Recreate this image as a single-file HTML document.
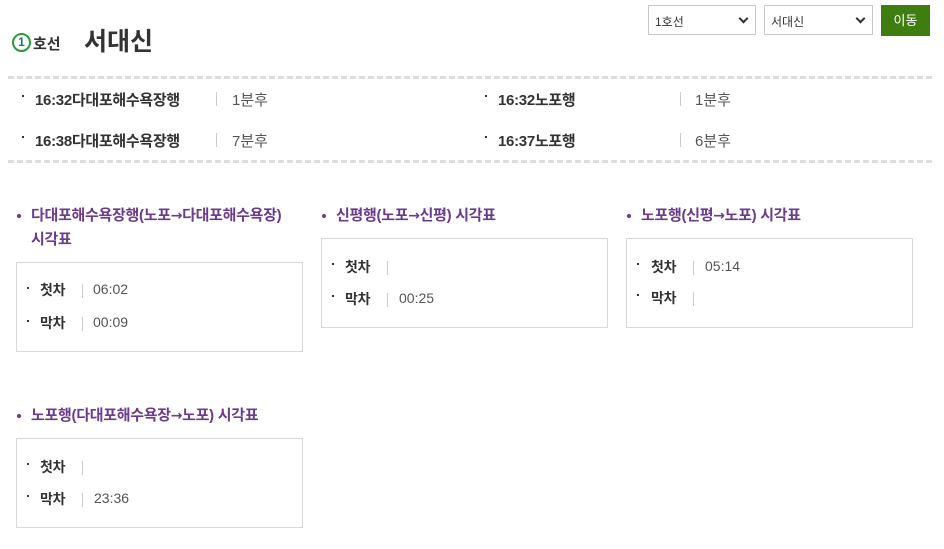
<!DOCTYPE html>
<html><head><meta charset="utf-8"><style>
body{margin:0;width:944px;height:549px;background:#fff;font-family:"Liberation Sans","Noto Sans CJK KR",sans-serif;color:#333;position:relative;overflow:hidden}
.a{position:absolute;white-space:nowrap}
.dash{position:absolute;left:8px;width:924px;height:0;border-top:3px dashed #ddd}
.b{font-weight:bold;font-size:15px;color:#333;letter-spacing:-0.3px}
.v{font-size:15px;color:#555}
.sep{position:absolute;width:1px;height:14px;background:#ccc}
.dot{position:absolute;width:2px;height:2px;background:#333}
.t{position:absolute;color:#6b3b8c;font-weight:bold;font-size:15px;line-height:24px;letter-spacing:-0.3px}
.t:before{content:"";position:absolute;left:-14px;top:10px;width:4px;height:4px;border-radius:50%;background:#6b3b8c}
.ar{font-family:"DejaVu Sans",sans-serif;font-size:14px}
.box{position:absolute;width:285px;height:88px;border:1px solid #d8d8d8}
.box .dot{left:10px}
.sel{position:absolute;top:5px;height:30px;border:1px solid #c8c8c8;font-size:12px;color:#333;box-sizing:border-box;padding:7px 6px}
.sel:after{content:"";position:absolute;right:8px;top:9px;width:5px;height:5px;border-right:2px solid #333;border-bottom:2px solid #333;transform:rotate(45deg)}
</style></head><body>
<div class="a" style="left:12px;top:33px;width:19px;height:19px;border:2px solid #2a9a3a;border-radius:50%;box-sizing:border-box;font-size:12px;font-weight:bold;color:#1a7a6a;text-align:center;line-height:15px">1</div>
<div class="a" style="left:33px;top:33px;font-size:15px;font-weight:bold;color:#333">호선</div>
<div class="a" style="left:84px;top:22px;font-size:25px;font-weight:bold;color:#333">서대신</div>
<div class="sel" style="left:648px;width:108px">1호선</div>
<div class="sel" style="left:764px;width:109px">서대신</div>
<div class="a" style="left:881px;top:5px;width:49px;height:31px;background:#3f7d11;color:#fff;font-size:13px;text-align:center;line-height:31px;display:flex;align-items:center;justify-content:center">이동</div>
<div class="dash" style="top:76px"></div>
<div class="dash" style="top:160px"></div>

<div class="dot" style="left:22px;top:95px"></div><div class="a b" style="left:35px;top:89px">16:32다대포해수욕장행</div><div class="sep" style="left:216px;top:92px"></div><div class="a v" style="left:232px;top:89px">1분후</div>
<div class="dot" style="left:22px;top:136px"></div><div class="a b" style="left:35px;top:130px">16:38다대포해수욕장행</div><div class="sep" style="left:216px;top:133px"></div><div class="a v" style="left:232px;top:130px">7분후</div>
<div class="dot" style="left:485px;top:95px"></div><div class="a b" style="left:498px;top:89px">16:32노포행</div><div class="sep" style="left:680px;top:92px"></div><div class="a v" style="left:695px;top:89px">1분후</div>
<div class="dot" style="left:485px;top:136px"></div><div class="a b" style="left:498px;top:130px">16:37노포행</div><div class="sep" style="left:680px;top:133px"></div><div class="a v" style="left:695px;top:130px">6분후</div>

<div class="t" style="left:31px;top:204px">다대포해수욕장행(노포<span class="ar">→</span>다대포해수욕장)<br>시각표</div>
<div class="box" style="left:16px;top:262px">
<div class="dot" style="top:24px"></div><div class="a b" style="left:23px;top:17px;font-size:14px">첫차</div><div class="sep" style="left:65px;top:21px"></div><div class="a v" style="left:76px;top:18px;font-size:14px">06:02</div>
<div class="dot" style="top:57px"></div><div class="a b" style="left:23px;top:50px;font-size:14px">막차</div><div class="sep" style="left:65px;top:54px"></div><div class="a v" style="left:76px;top:51px;font-size:14px">00:09</div>
</div>
<div class="t" style="left:336px;top:204px">신평행(노포<span class="ar">→</span>신평) 시각표</div>
<div class="box" style="left:321px;top:238px">
<div class="dot" style="top:24px"></div><div class="a b" style="left:23px;top:18px;font-size:14px">첫차</div><div class="sep" style="left:65px;top:22px"></div>
<div class="dot" style="top:56px"></div><div class="a b" style="left:23px;top:50px;font-size:14px">막차</div><div class="sep" style="left:65px;top:54px"></div><div class="a v" style="left:77px;top:51px;font-size:14px">00:25</div>
</div>
<div class="t" style="left:641px;top:204px">노포행(신평<span class="ar">→</span>노포) 시각표</div>
<div class="box" style="left:626px;top:238px">
<div class="dot" style="top:24px"></div><div class="a b" style="left:24px;top:18px;font-size:14px">첫차</div><div class="sep" style="left:66px;top:22px"></div><div class="a v" style="left:78px;top:19px;font-size:14px">05:14</div>
<div class="dot" style="top:55px"></div><div class="a b" style="left:24px;top:49px;font-size:14px">막차</div><div class="sep" style="left:66px;top:53px"></div>
</div>
<div class="t" style="left:31px;top:404px">노포행(다대포해수욕장<span class="ar">→</span>노포) 시각표</div>
<div class="box" style="left:16px;top:438px">
<div class="dot" style="top:24px"></div><div class="a b" style="left:23px;top:18px;font-size:14px">첫차</div><div class="sep" style="left:65px;top:22px"></div>
<div class="dot" style="top:56px"></div><div class="a b" style="left:23px;top:50px;font-size:14px">막차</div><div class="sep" style="left:65px;top:54px"></div><div class="a v" style="left:77px;top:51px;font-size:14px">23:36</div>
</div>
</body></html>
